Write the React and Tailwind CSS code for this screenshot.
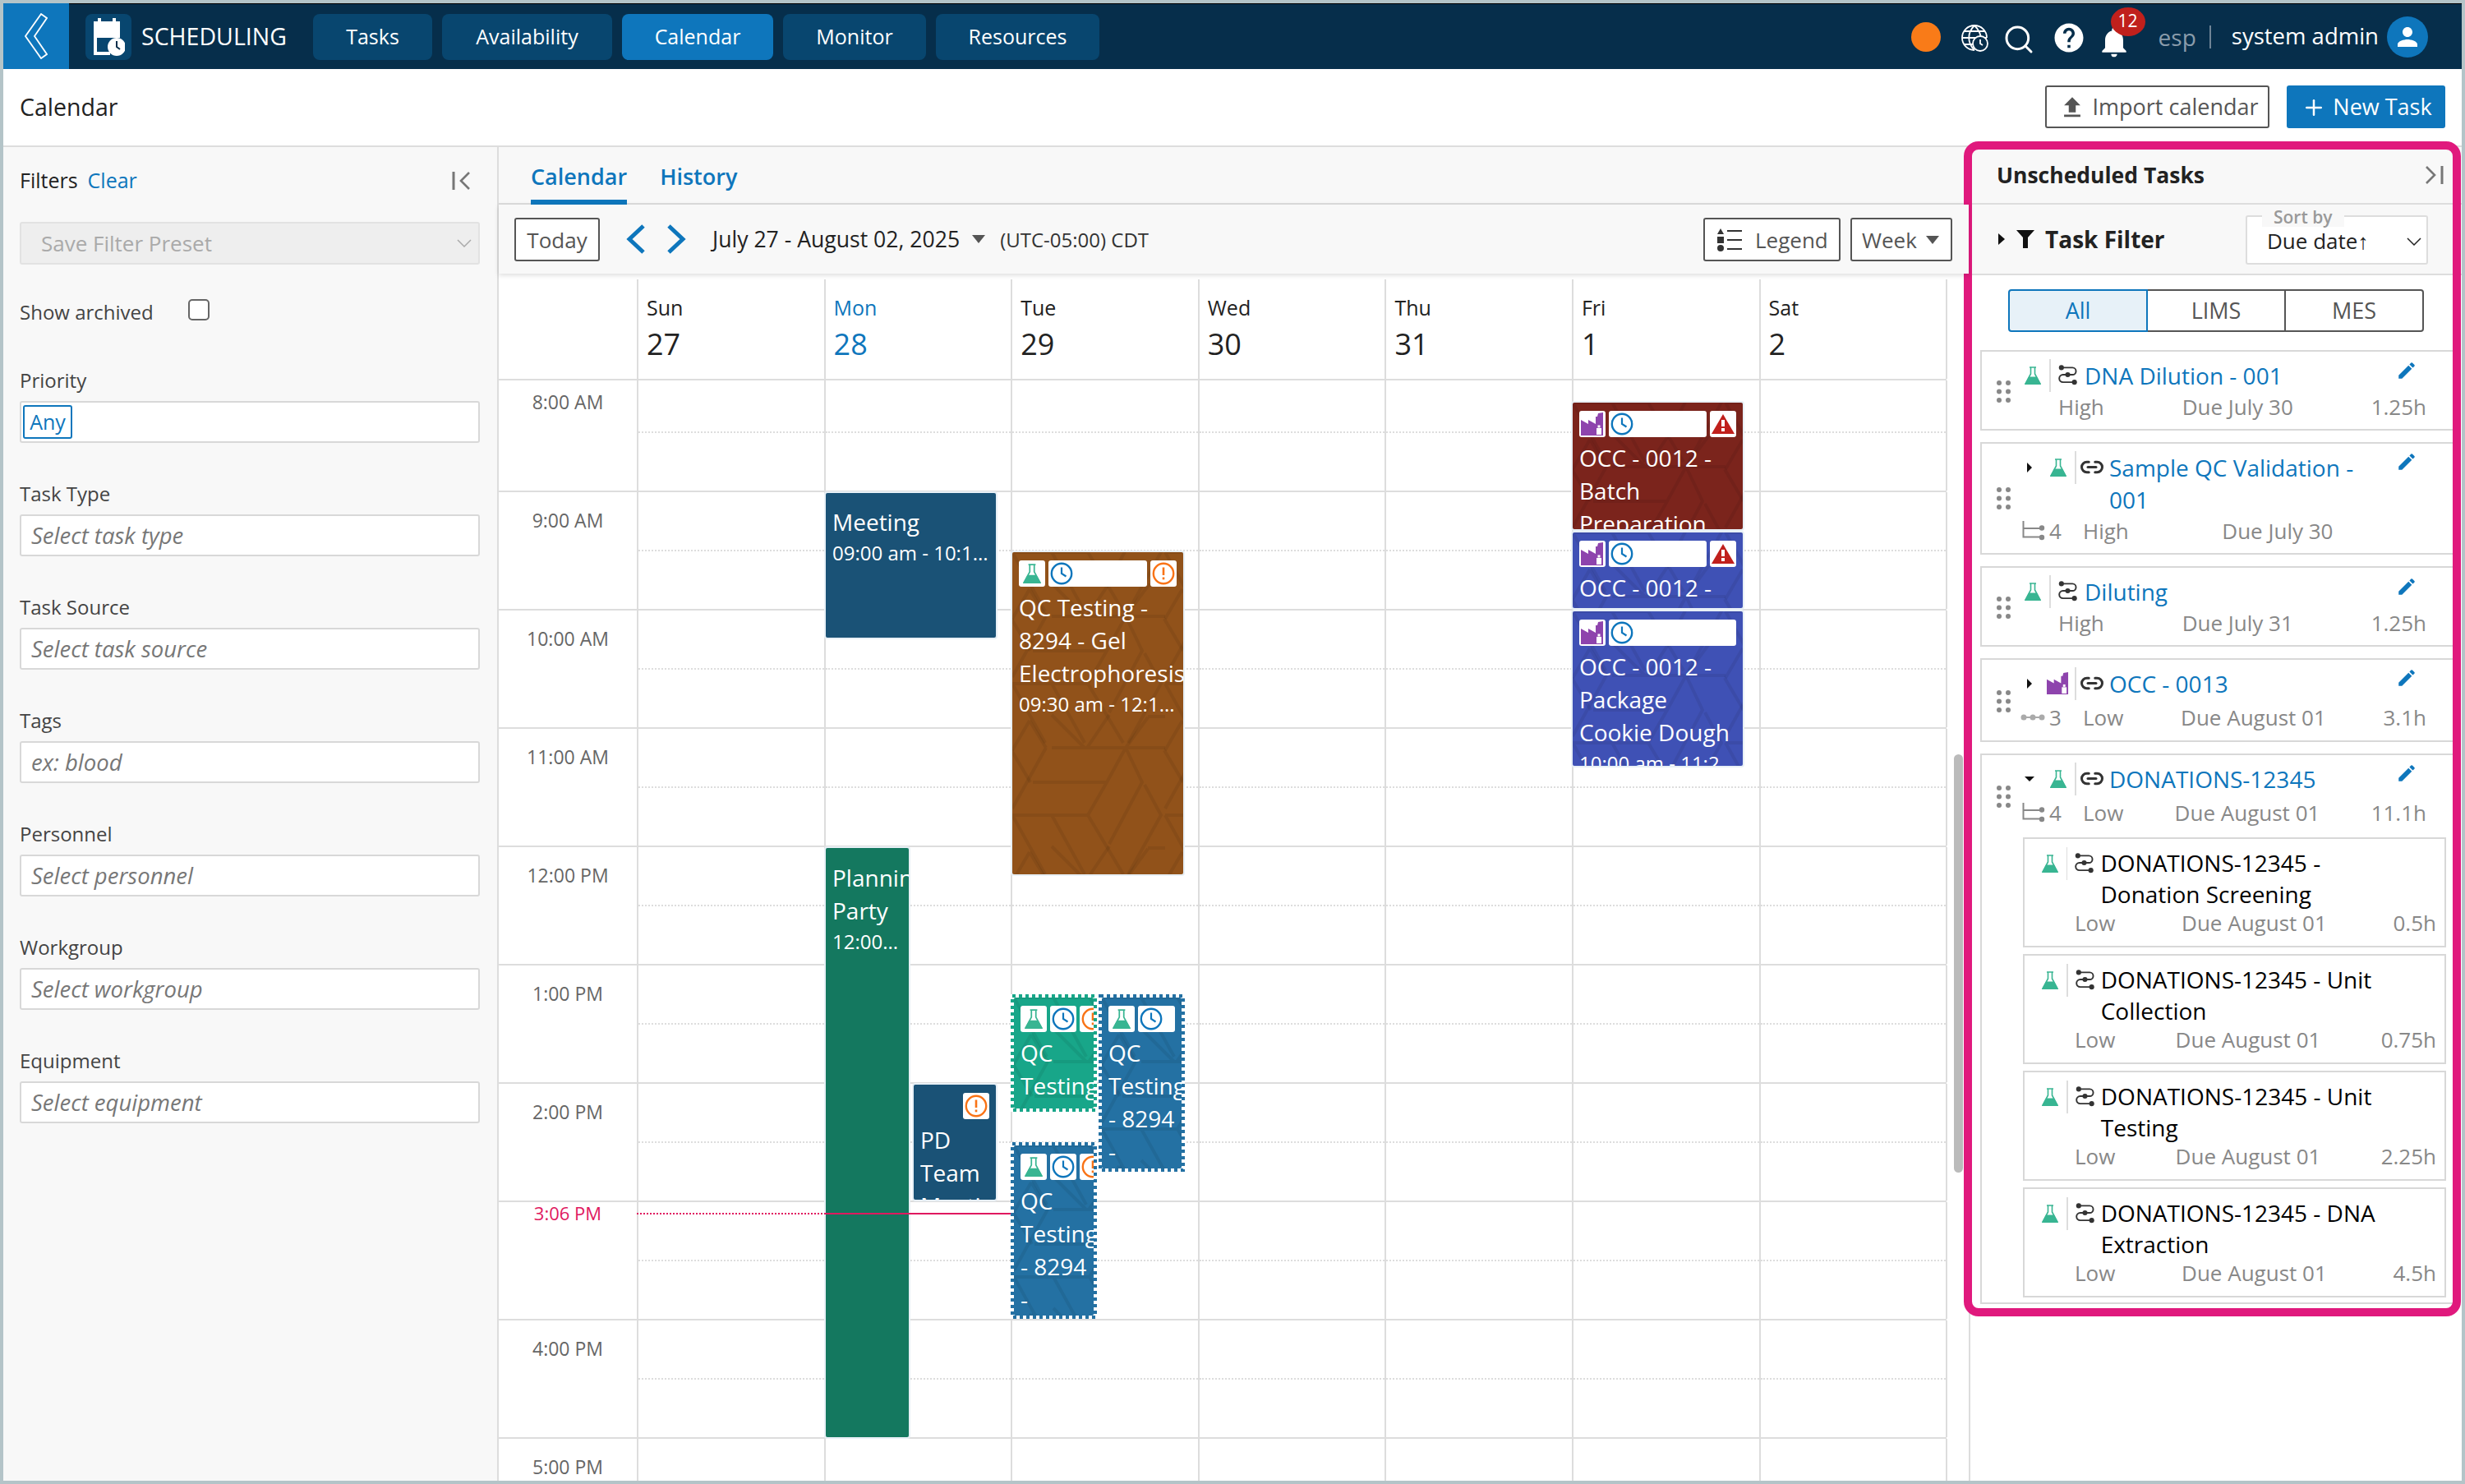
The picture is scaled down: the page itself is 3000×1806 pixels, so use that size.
import React from "react";
import { Search, Plus, Link2 } from "lucide-react";
import { MdHelp, MdNotifications, MdPerson, MdFileUpload, MdEdit } from "react-icons/md";

const hours = ["8:00 AM", "9:00 AM", "10:00 AM", "11:00 AM", "12:00 PM", "1:00 PM", "2:00 PM", "", "4:00 PM", "5:00 PM"];
const days = [
  ["Sun", "27"],
  ["Mon", "28"],
  ["Tue", "29"],
  ["Wed", "30"],
  ["Thu", "31"],
  ["Fri", "1"],
  ["Sat", "2"],
];
const filters = [
  ["Task Type", "Select task type"],
  ["Task Source", "Select task source"],
  ["Tags", "ex: blood"],
  ["Personnel", "Select personnel"],
  ["Workgroup", "Select workgroup"],
  ["Equipment", "Select equipment"],
];

// Small icons
const Flask = ({ className }) => (
  <svg viewBox="0 0 20 22" className={className}>
    <path d="M6 1h8M7.500 1v8L1 21h18L12.500 9V1" fill="none" stroke="#38b592" strokeWidth="1.600" />
    <path d="M5 12.500h10l5 9.500H0z" fill="#38b592" />
  </svg>
);

const Clock = ({ className }) => (
  <svg viewBox="0 0 28 28" className={className}>
    <circle cx="14" cy="14" r="12.200" fill="none" stroke="#0e76bc" strokeWidth="2.400" />
    <path d="M14 6.500V14l5.500 3.500" fill="none" stroke="#0e76bc" strokeWidth="2.200" />
  </svg>
);

const Warn = ({ className }) => (
  <svg viewBox="0 0 28 26" className={className}>
    <path d="M14 1L28 25H0z" fill="#c0201c" />
    <rect x="12" y="8" width="4" height="8" fill="#fff" />
    <rect x="12" y="18" width="4" height="4" fill="#fff" />
  </svg>
);

const Alert = ({ className }) => (
  <svg viewBox="0 0 28 28" className={className}>
    <circle cx="14" cy="14" r="12.200" fill="none" stroke="#f97316" strokeWidth="2.400" />
    <rect x="12.700" y="6.500" width="2.600" height="9.500" fill="#f97316" />
    <rect x="12.700" y="18.500" width="2.600" height="2.800" fill="#f97316" />
  </svg>
);

const Factory = ({ className }) => (
  <svg viewBox="0 0 28 28" className={className}>
    <path d="M0 28V9l9 5V9l9 5V5l2 0 1-4 6-1v28z" fill="#8e44ad" />
    <rect x="19" y="19" width="6" height="8" fill="#fff" />
    <rect x="20.500" y="15.500" width="3" height="3" fill="#fff" />
  </svg>
);

const Process = ({ className }) => (
  <svg viewBox="0 0 24 26" className={className} fill="none" stroke="#333" strokeWidth="2">
    <path d="M4 3.500H18a4.500 4.500 0 0 1 0 9H6a4.500 4.500 0 0 0 0 9.500H20" />
    <circle cx="4" cy="3.500" r="3.200" fill="#333" stroke="none" />
    <circle cx="12" cy="12.500" r="3.200" fill="#333" stroke="none" />
    <circle cx="20.500" cy="22" r="3.200" fill="#333" stroke="none" />
  </svg>
);

const Tree = () => (
  <svg viewBox="0 0 28 24" className="w-[28px] h-[24px] shrink-0 ml-[2px]" fill="none" stroke="#888" strokeWidth="2">
    <path d="M1.500 0V19.500H22M1.500 9H22" />
    <circle cx="24" cy="8.500" r="3.200" fill="#888" stroke="none" />
    <circle cx="24" cy="20" r="3.200" fill="#888" stroke="none" />
  </svg>
);

const Chain = () => (
  <svg viewBox="0 0 30 10" className="w-[30px] h-[10px] shrink-0 self-center" stroke="#aaa" strokeWidth="2">
    <path d="M2 5H28" />
    <circle cx="4" cy="5" r="3.500" fill="#aaa" stroke="none" />
    <circle cx="15" cy="5" r="3.500" fill="#aaa" stroke="none" />
    <circle cx="26" cy="5" r="3.500" fill="#aaa" stroke="none" />
  </svg>
);

const Dots = () => (
  <svg viewBox="0 0 17 27" className="w-[17px] h-[27px] shrink-0" fill="#888">
    <circle cx="3" cy="3" r="3" />
    <circle cx="14" cy="3" r="3" />
    <circle cx="3" cy="13.500" r="3" />
    <circle cx="14" cy="13.500" r="3" />
    <circle cx="3" cy="24" r="3" />
    <circle cx="14" cy="24" r="3" />
  </svg>
);

const Caret = ({ open }) => (
  <svg viewBox="0 0 12 12" className="w-[12px] h-[12px]">
    {open ? <path d="M0 3h12L6 9z" fill="#111" /> : <path d="M3 0v12l6-6z" fill="#111" />}
  </svg>
);

const Collapse = ({ flip }) => (
  <svg viewBox="0 0 24 24" className={flip ? "w-[24px] h-[24px] scale-x-[-1]" : "w-[24px] h-[24px]"} fill="none" stroke="#777" strokeWidth="2.600">
    <path d="M2 1V23" strokeWidth="3" />
    <path d="M21 2L11 12l10 10" />
  </svg>
);

// Cube lines of the task block background, one 186x160 tile
const cube =
  "M48 40H186M25 82H115M0 122H92M41 40L0 114M138 40L115 82L92 122L135 194M138 40L158 82L118 157M161 85L181 122L141 194M0 122L40 194M48 122L88 194M21 7L41 40M0 43L21 7M48 0L88 40M91 40L118 0M165 3L138 40M165 2H186M185 43L208 82";

const Pattern = ({ id }) => (
  <svg className="absolute inset-0 w-full h-full pointer-events-none">
    <defs>
      <pattern id={id} width="186" height="160" patternUnits="userSpaceOnUse" patternTransform="translate(0 38)">
        {[-186, 0, 186].map((dx) =>
          [-160, 0, 160].map((dy) => (
            <path key={`${dx}${dy}`} d={cube} transform={`translate(${dx} ${dy})`} fill="none" stroke="#000" strokeOpacity="0.07" strokeWidth="4" />
          ))
        )}
      </pattern>
    </defs>
    <rect width="100%" height="100%" fill={`url(#${id})`} />
  </svg>
);

const IconBox = ({ className, children }) => (
  <div className={`h-[32px] bg-white rounded-[3px] flex items-center shrink-0 ${className}`}>{children}</div>
);

const events = [
  {
    id: "meeting",
    pos: "left-[398px] top-[137px] w-[207px] h-[176px]",
    bg: "bg-[#1a5276]",
    plain: true,
    top: "pt-[15px]",
    title: ["Meeting"],
    time: "09:00 am - 10:1...",
  },
  {
    id: "gel",
    pos: "left-[625px] top-[209px] w-[208px] h-[392px]",
    bg: "bg-[#91521a]",
    flask: true,
    alert: "alert",
    clockW: "w-[120px]",
    title: ["QC Testing -", "8294 - Gel", "Electrophoresis"],
    time: "09:30 am - 12:1...",
  },
  {
    id: "planning",
    pos: "left-[398px] top-[569px] w-[101px] h-[717px]",
    bg: "bg-[#14785f]",
    plain: true,
    top: "pt-[16px]",
    title: ["Planning", "Party"],
    time: "12:00...",
  },
  {
    id: "pd",
    pos: "left-[505px] top-[857px] w-[100px] h-[140px]",
    bg: "bg-[#1a5276]",
    onlyAlert: true,
    noPattern: true,
    title: ["PD", "Team", "Meeting"],
  },
  {
    id: "red",
    pos: "left-[1307px] top-[27px] w-[207px] h-[154px]",
    bg: "bg-[#7b241c]",
    factory: true,
    alert: "warn",
    clockW: "w-[119px]",
    title: ["OCC - 0012 -", "Batch", "Preparation"],
  },
  {
    id: "occ1",
    pos: "left-[1307px] top-[185px] w-[207px] h-[92px]",
    bg: "bg-[#3f51b5]",
    factory: true,
    alert: "warn",
    clockW: "w-[119px]",
    title: ["OCC - 0012 -"],
  },
  {
    id: "occ2",
    pos: "left-[1307px] top-[281px] w-[207px] h-[188px]",
    bg: "bg-[#3f51b5]",
    factory: true,
    clockW: "w-[155px]",
    title: ["OCC - 0012 -", "Package", "Cookie Dough"],
    time: "10:00 am - 11:2",
  },
];

const dashed = [
  { id: "qc1", pos: "left-[623px] top-[747px] w-[105px] h-[143px]", w: 105, h: 143, color: "#18a689", bg: "bg-[#18a689]", alert: true, title: ["QC", "Testing"] },
  { id: "qc2", pos: "left-[623px] top-[927px] w-[105px] h-[215px]", w: 105, h: 215, color: "#2471a3", bg: "bg-[#2471a3]", alert: true, title: ["QC", "Testing", "- 8294", "-"] },
  { id: "qc3", pos: "left-[730px] top-[747px] w-[105px] h-[216px]", w: 105, h: 216, color: "#2471a3", bg: "bg-[#2471a3]", title: ["QC", "Testing", "- 8294", "-"] },
];

const EventBlock = ({ ev }) => (
  <div className={`absolute ${ev.pos} ${ev.bg} rounded-[2px] ring-2 ring-[#e8f0f6] overflow-hidden text-white`}>
    {!ev.plain && !ev.noPattern && <Pattern id={`p-${ev.id}`} />}
    <div className={`relative px-[8px] ${ev.top || "pt-[10px]"}`}>
      {!ev.plain && !ev.onlyAlert && (
        <div className="flex gap-[4px] mb-[5px]">
          <IconBox className="w-[32px] justify-center">
            {ev.flask ? <Flask className="w-[22px] h-[24px]" /> : <Factory className="w-[28px] h-[28px]" />}
          </IconBox>
          <IconBox className={`${ev.clockW} pl-[2px]`}>
            <Clock className="w-[28px] h-[28px]" />
          </IconBox>
          {ev.alert === "warn" && (
            <IconBox className="w-[32px] justify-center">
              <Warn className="w-[28px] h-[26px]" />
            </IconBox>
          )}
          {ev.alert === "alert" && (
            <IconBox className="w-[32px] justify-center">
              <Alert className="w-[28px] h-[28px]" />
            </IconBox>
          )}
        </div>
      )}
      {ev.onlyAlert && (
        <div className="flex justify-end mb-[5px]">
          <IconBox className="w-[32px] justify-center">
            <Alert className="w-[28px] h-[28px]" />
          </IconBox>
        </div>
      )}
      {ev.title.map((line) => (
        <div key={line} className="text-[28px] leading-[40px] font-medium whitespace-nowrap">
          {line}
        </div>
      ))}
      {ev.time && <div className="text-[24px] leading-[36px] whitespace-nowrap">{ev.time}</div>}
    </div>
  </div>
);

const DashedBlock = ({ ev }) => (
  <div className={`absolute ${ev.pos} bg-white overflow-hidden text-white`}>
    <svg className="absolute inset-0 w-full h-full" width={ev.w} height={ev.h}>
      <rect x="2" y="2" width={ev.w - 4} height={ev.h - 4} fill="none" stroke={ev.color} strokeWidth="4" strokeDasharray="4 4" />
    </svg>
    <div className={`absolute inset-[4px] ${ev.bg} rounded-[2px] overflow-hidden`}>
      <Pattern id={`p-${ev.id}`} />
      <div className="relative pl-[8px] pt-[10px]">
        <div className="flex gap-[4px] mb-[5px]">
          <IconBox className="w-[32px] justify-center">
            <Flask className="w-[22px] h-[24px]" />
          </IconBox>
          <IconBox className={ev.alert ? "w-[32px] justify-center" : "w-[45px] pl-[2px]"}>
            <Clock className="w-[28px] h-[28px]" />
          </IconBox>
          {ev.alert && (
            <IconBox className="w-[32px] pl-[2px]">
              <Alert className="w-[28px] h-[28px] shrink-0" />
            </IconBox>
          )}
        </div>
        {ev.title.map((line, i) => (
          <div key={i} className="text-[28px] leading-[40px] font-medium whitespace-nowrap">
            {line}
          </div>
        ))}
      </div>
    </div>
  </div>
);

const Meta = ({ left, due, est, className }) => (
  <div className={`flex justify-between text-[26px] text-[#888] ${className}`}>
    <span>{left}</span>
    <span>{due}</span>
    <span>{est}</span>
  </div>
);

// Card with no children: flask, separator, process icon
const SimpleTask = ({ title, pri, due, est }) => (
  <div className="flex items-center h-[98px] border-2 border-[#d8d8d8] pt-[9px] pb-[6px] pr-[33px] shrink-0">
    <div className="pl-[18px] pr-[12px] flex items-center">
      <Dots />
    </div>
    <div className="flex-1 min-w-0 self-start">
      <div className="flex items-center h-[39px]">
        <Flask className="w-[20px] h-[22px] ml-[5px]" />
        <div className="w-[2px] h-[40px] bg-[#ddd] ml-[10px]" />
        <Process className="w-[23px] h-[25px] ml-[9px]" />
        <span className="ml-[9px] pt-[2px] text-[28px] leading-[39px] text-[#0e76bc]">{title}</span>
        <MdEdit className="ml-auto mr-[11px] -mt-[12px] text-[#0e76bc] w-[26px] h-[26px]" />
      </div>
      <Meta left={pri} due={due} est={est} className="ml-[46px] leading-[38px]" />
    </div>
  </div>
);

const ParentHead = ({ icon, title, sub, count, pri, due, est, metaClass }) => (
  <div className="flex items-center pr-[33px]">
    <div className="pl-[18px] pr-[12px] flex items-center">
      <Dots />
    </div>
    <div className="flex-1 min-w-0">
      <div className="flex items-start">
        <div className="w-[36px] h-[39px] flex items-center pl-[5px]">
          <Caret open={sub === "open"} />
        </div>
        <div className="w-[28px] h-[39px] flex items-center">{icon}</div>
        <div className="w-[2px] h-[40px] bg-[#ddd] ml-[2px]" />
        <Link2 className="w-[30px] h-[39px] ml-[4px] shrink-0 text-[#333]" strokeWidth={2.4} />
        <span className="ml-[6px] pt-[1px] text-[28px] leading-[39px] text-[#0e76bc] flex-1 pr-[40px]">{title}</span>
        <MdEdit className="mr-[11px] text-[#0e76bc] w-[26px] h-[26px] shrink-0" />
      </div>
      <div className={`flex items-center ${metaClass}`}>
        <div className="w-[35px] flex">{count === "3" ? <Chain /> : <Tree />}</div>
        <span className="text-[26px] text-[#888] w-[41px]">{count}</span>
        <Meta left={pri} due={due} est={est} className="flex-1" />
      </div>
    </div>
  </div>
);

const SubTask = ({ title, due, est }) => (
  <div className="border-2 border-[#d8d8d8] h-[134px] pt-[10px] pr-[10px] pl-[21px] shrink-0">
    <div className="flex items-start">
      <div className="h-[39px] flex items-center">
        <Flask className="w-[20px] h-[22px]" />
      </div>
      <div className="w-[2px] h-[40px] bg-[#ddd] ml-[10px]" />
      <div className="h-[39px] flex items-center ml-[9px]">
        <Process className="w-[23px] h-[25px]" />
      </div>
      <span className="ml-[8px] pr-[20px] text-[28px] leading-[38px] text-black">{title}</span>
    </div>
    <Meta left="Low" due={due} est={est} className="ml-[40px] leading-[33px]" />
  </div>
);

const Field = ({ label, text }) => (
  <div className="mt-[45px]">
    <div className="text-[24px] leading-[34px] text-[#444]">{label}</div>
    <div className="mt-[8px] h-[51px] bg-white border-2 border-[#d8d8d8] rounded-[3px] flex items-center px-[12px] text-[27.500px] italic text-[#777]">{text}</div>
  </div>
);

export default function App() {
  return (
    <div className="w-[3000px] h-[1806px] p-[4px] bg-[#b4c4c8] overflow-hidden relative flex flex-col font-['Open_Sans',sans-serif] text-[#222]">
      {/* Top navigation */}
      <div className="h-[80px] shrink-0 bg-[#062e4b] border-t border-black flex items-center text-white">
        <div className="w-[80px] h-[80px] bg-[#0e76bc] flex items-center justify-center -mt-px">
          <svg viewBox="0 0 28 56" className="w-[28px] h-[56px]" fill="none" stroke="#fff" strokeWidth="1.800">
            <path d="M20 1L1 28L20 55L27 50L12 28L27 6z" />
          </svg>
        </div>
        <div className="ml-[20px] w-[56px] h-[56px] bg-[#08466f] rounded-[8px] flex items-center justify-center">
          <svg viewBox="0 0 40 50" className="w-[40px] h-[50px]">
            <path d="M2 6h5V2h4v4h14V2h4v4h5v20H2z" fill="#fff" />
            <path d="M2 26h4v17h16v4H2z" fill="#fff" />
            <circle cx="30" cy="37" r="11" fill="#fff" />
            <path d="M30 30v7l4 3" fill="none" stroke="#062e4b" strokeWidth="2" />
          </svg>
        </div>
        <div className="ml-[12px] w-[209px] text-[28.500px] font-medium">SCHEDULING</div>
        <div className="flex gap-[12px] text-[25px] font-medium">
          <div className="w-[145px] h-[56px] rounded-[8px] bg-[#08466f] flex items-center justify-center">Tasks</div>
          <div className="w-[207px] h-[56px] rounded-[8px] bg-[#08466f] flex items-center justify-center">Availability</div>
          <div className="w-[184px] h-[56px] rounded-[8px] bg-[#0e76bc] flex items-center justify-center">Calendar</div>
          <div className="w-[174px] h-[56px] rounded-[8px] bg-[#08466f] flex items-center justify-center">Monitor</div>
          <div className="w-[199px] h-[56px] rounded-[8px] bg-[#08466f] flex items-center justify-center">Resources</div>
        </div>
        <div className="ml-auto flex items-center pr-[41px]">
          <div className="w-[36px] h-[36px] rounded-full bg-[#f97b18]" />
          <svg viewBox="0 0 34 34" className="w-[34px] h-[34px] ml-[24px] mt-[3px]" fill="none" stroke="#fff" strokeWidth="1.800">
            <path d="M17 32a15 15 0 1 1 15-15M2 17h30M4 9h26M4 25h11M17 2c-9 9-9 21 0 30M17 2c6 6 8 12 8 17" />
            <circle cx="24" cy="24" r="9" fill="#062e4b" />
            <path d="M24 19v5l3 2" />
          </svg>
          <Search className="w-[40px] h-[40px] ml-[17px] mt-[6px]" strokeWidth={1.800} />
          <MdHelp className="w-[42px] h-[42px] ml-[20px] mt-[2px]" />
          <div className="relative w-[34px] h-[40px] ml-[19px] mt-[8px]">
            <MdNotifications className="w-[44px] h-[44px] -ml-[7px] max-w-none" />
            <div className="absolute left-[11px] -top-[20px] w-[42px] h-[35px] rounded-[50%] bg-[#c0201c] flex items-center justify-center text-[21px]">12</div>
          </div>
          <span className="ml-[35px] text-[28px] text-[#8a9cab]">esp</span>
          <div className="ml-[16px] w-[2px] h-[28px] bg-[#6f8496]" />
          <span className="ml-[25px] -mt-[2px] text-[27.500px]">system admin</span>
          <div className="ml-[10px] w-[50px] h-[50px] rounded-full bg-[#0e76bc] flex items-center justify-center">
            <MdPerson className="w-[36px] h-[36px]" />
          </div>
        </div>
      </div>

      {/* Page title bar */}
      <div className="h-[95px] shrink-0 bg-white border-b-2 border-[#ddd] flex items-center justify-between pl-[20px] pr-[20px]">
        <div className="text-[28.500px] font-medium">Calendar</div>
        <div className="flex gap-[21px] -mt-[2px]">
          <button className="w-[273px] h-[52px] border-2 border-[#555] rounded-[3px] flex items-center justify-center gap-[8px] pl-[2px] pt-[2px] text-[27px] text-[#555] font-medium">
            <MdFileUpload className="w-[34px] h-[34px]" />
            Import calendar
          </button>
          <button className="w-[193px] h-[52px] bg-[#0e76bc] rounded-[3px] flex items-center justify-center gap-[8px] pl-[2px] pt-[2px] text-[27px] text-white font-medium">
            <Plus className="w-[30px] h-[30px]" strokeWidth={2} />
            New Task
          </button>
        </div>
      </div>

      <div className="flex-1 min-h-0 flex">
        {/* Filters */}
        <div className="w-[603px] shrink-0 bg-[#f8f8f8] border-r-2 border-[#ddd] pl-[20px] pt-[24px]">
          <div className="w-[560px]">
            <div className="flex items-center h-[34px] text-[25px]">
              <span className="font-medium">Filters</span>
              <span className="ml-[12px] font-medium text-[#0e76bc]">Clear</span>
              <div className="ml-auto mr-[10px] flex">
                <Collapse />
              </div>
            </div>
            <div className="mt-[33px] h-[52px] bg-[#eee] border-2 border-[#e2e2e2] rounded-[3px] flex items-center justify-between pl-[24px] pr-[8px] text-[26px] text-[#aaa]">
              Save Filter Preset
              <svg viewBox="0 0 18 10" className="w-[18px] h-[10px]" fill="none" stroke="#aaa" strokeWidth="1.500">
                <path d="M1 1l8 8 8-8" />
              </svg>
            </div>
            <div className="mt-[41px] h-[34px] flex items-center text-[24px] text-[#444]">
              <span>Show archived</span>
              <div className="ml-[42px] -mt-[6px] w-[26px] h-[26px] border-2 border-[#666] rounded-[5px] bg-white" />
            </div>
            <div className="mt-[49px] text-[24px] leading-[34px] text-[#444]">Priority</div>
            <div className="mt-[8px] h-[51px] bg-white border-2 border-[#d8d8d8] rounded-[3px] flex items-center pl-[2px]">
              <div className="h-[41px] w-[60px] border-2 border-[#0e76bc] rounded-[3px] flex items-center justify-center text-[25px] text-[#0e76bc] font-medium">Any</div>
            </div>
            {filters.map(([label, text]) => (
              <Field key={label} label={label} text={text} />
            ))}
          </div>
        </div>

        {/* Calendar */}
        <div className="w-[1789px] shrink-0 flex flex-col bg-white">
          <div className="h-[70px] shrink-0 bg-[#f8f8f8] border-b-2 border-[#ddd] flex pl-[39px] gap-[40px] text-[27px] font-semibold text-[#0e76bc]">
            <div className="h-[70px] pt-[16px] border-b-[6px] border-[#0e76bc]">Calendar</div>
            <div className="h-[70px] pt-[16px]">History</div>
          </div>
          <div className="h-[84px] shrink-0 bg-[#f8f8f8] relative z-10 shadow-[0_2px_6px_rgba(0,0,0,0.14)] flex items-center pl-[19px] pr-[20px]">
            <button className="w-[104px] h-[53px] border-2 border-[#555] rounded-[3px] bg-white pt-[2px] text-[26px] text-[#555]">Today</button>
            <svg viewBox="0 0 24 36" className="w-[24px] h-[36px] ml-[32px]" fill="none" stroke="#0e76bc" strokeWidth="5">
              <path d="M21 2L4 18l17 16" />
            </svg>
            <svg viewBox="0 0 24 36" className="w-[24px] h-[36px] ml-[25px]" fill="none" stroke="#0e76bc" strokeWidth="5">
              <path d="M3 2l17 16L3 34" />
            </svg>
            <span className="ml-[32px] pt-[2px] text-[26.600px] font-medium">July 27 - August 02, 2025</span>
            <svg viewBox="0 0 16 12" className="w-[16px] h-[12px] ml-[15px]">
              <path d="M0 1h16L8 11z" fill="#555" />
            </svg>
            <span className="ml-[18px] pt-[2px] text-[24px] text-[#333]">(UTC-05:00) CDT</span>
            <button className="ml-auto w-[167px] h-[53px] border-2 border-[#555] rounded-[3px] bg-white flex items-center pl-[15px] pt-[2px] text-[26px] text-[#555] gap-[16px]">
              <svg viewBox="0 0 30 28" className="w-[30px] h-[28px]" fill="#333">
                <path d="M4 0l4 7H0z" />
                <rect x="0" y="10" width="8" height="8" />
                <circle cx="4" cy="24" r="4" />
                <rect x="12" y="2" width="18" height="2" />
                <rect x="12" y="13" width="18" height="2" />
                <rect x="12" y="24" width="18" height="2" />
              </svg>
              Legend
            </button>
            <button className="ml-[12px] w-[124px] h-[53px] border-2 border-[#555] rounded-[3px] bg-white flex items-center pl-[12px] pt-[2px] text-[26px] text-[#555] gap-[11px]">
              Week
              <svg viewBox="0 0 16 10" className="w-[16px] h-[10px]">
                <path d="M0 0h16L8 10z" fill="#555" />
              </svg>
            </button>
          </div>

          {/* Day header */}
          <div className="mt-[7px] w-[1762px] h-[123px] shrink-0 flex border-b-2 border-[#ddd]">
            <div className="w-[168px] shrink-0" />
            {days.map(([name, num]) => (
              <div key={name} className={`w-[227.6px] shrink-0 border-l-2 border-[#ddd] pl-[10px] pt-[17px] ${name === "Mon" ? "text-[#0e76bc]" : "text-[#222]"}`}>
                <div className="text-[25px] leading-[34px]">{name}</div>
                <div className="text-[36px] leading-[50px] mt-[3px]">{num}</div>
              </div>
            ))}
            <div className="border-l-2 border-[#ddd]" />
          </div>

          {/* Time grid */}
          <div className="flex-1 min-h-0 relative overflow-hidden">
            {hours.map((h, i) => (
              <div key={i} className={`flex w-[1762px] shrink-0 border-b-2 border-[#ddd] ${i === 0 ? "h-[136px]" : "h-[144px]"}`}>
                <div className={`w-[168px] shrink-0 text-center text-[23px] leading-[32px] text-[#666] ${i === 0 ? "pt-[10px]" : "pt-[18px]"}`}>{h}</div>
                {days.map(([name]) => (
                  <div key={name} className="w-[227.6px] shrink-0 border-l-2 border-[#ddd]">
                    <div className={`border-b-2 border-dotted border-[#ddd] ${i === 0 ? "h-[64px]" : "h-[72px]"}`} />
                  </div>
                ))}
                <div className="border-l-2 border-[#ddd]" />
              </div>
            ))}

            {events.map((ev) => (
              <EventBlock key={ev.id} ev={ev} />
            ))}
            {dashed.map((ev) => (
              <DashedBlock key={ev.id} ev={ev} />
            ))}

            {/* Current time */}
            <div className="absolute left-0 top-[996px] w-[168px] text-center text-[22px] leading-[34px] text-[#e0195f]">3:06 PM</div>
            <div className="absolute left-[168px] top-[1013px] w-[230px] border-t-2 border-dotted border-[#e0195f]" />
            <div className="absolute left-[398px] top-[1013px] w-[225px] h-[2px] bg-[#e0195f]" />

            <div className="absolute left-[1771px] top-[455px] w-[11px] h-[509px] bg-[#bbb] rounded-[6px]" />
          </div>
        </div>

        {/* Unscheduled tasks */}
        <div className="w-[600px] shrink-0 bg-white border-l-2 border-[#ddd] flex flex-col">
          <div className="h-[70px] shrink-0 bg-[#f8f8f8] border-b-2 border-[#ddd] flex items-center justify-between pl-[32px] pr-[22px]">
            <span className="pt-[2px] text-[26.500px] font-bold">Unscheduled Tasks</span>
            <Collapse flip />
          </div>
          <div className="h-[86px] shrink-0 bg-[#f8f8f8] border-b-2 border-[#ddd] flex items-center pl-[34px] relative">
            <svg viewBox="0 0 8 14" className="w-[8px] h-[14px]">
              <path d="M0 0v14l8-7z" fill="#111" />
            </svg>
            <svg viewBox="0 0 22 22" className="w-[22px] h-[22px] ml-[14px]">
              <path d="M0 0h22l-8 9v13h-6V9z" fill="#111" />
            </svg>
            <span className="ml-[13px] text-[28px] font-bold">Task Filter</span>
            <div className="absolute left-[335px] top-[13px] w-[222px] h-[60px] border-2 border-[#ddd] rounded-[3px] bg-white flex items-center justify-between pl-[24px] pr-[6px] pt-[3px] text-[26px]">
              Due date↑
              <svg viewBox="0 0 18 10" className="w-[18px] h-[10px]" fill="none" stroke="#222" strokeWidth="1.500">
                <path d="M1 1l8 8 8-8" />
              </svg>
              <span className="absolute left-[18px] -top-[12px] px-[14px] bg-[#f8f8f8] text-[21px] leading-[24px] font-semibold text-[#999]">Sort by</span>
            </div>
          </div>
          <div className="pt-[17px] pl-[46px] flex shrink-0 text-[27px] font-medium text-[#555]">
            <div className="w-[170px] h-[52px] bg-[#e7f1f8] border-2 border-[#0e76bc] rounded-l-[4px] flex items-center justify-center text-[#0e76bc]">All</div>
            <div className="w-[168px] h-[52px] border-y-2 border-r-2 border-[#555] flex items-center justify-center">LIMS</div>
            <div className="w-[168px] h-[52px] border-y-2 border-r-2 border-[#555] rounded-r-[4px] flex items-center justify-center">MES</div>
          </div>
          <div className="mt-[22px] ml-[12px] mr-[8px] flex flex-col gap-[14px]">
            <SimpleTask title="DNA Dilution - 001" pri="High" due="Due July 30" est="1.25h" />
            <div className="h-[137px] border-2 border-[#d8d8d8] pt-[9px] shrink-0">
              <ParentHead
                icon={<Flask className="w-[20px] h-[22px]" />}
                title="Sample QC Validation - 001"
                count="4"
                pri="High"
                due="Due July 30"
                est=""
                metaClass="leading-[36px]"
              />
            </div>
            <SimpleTask title="Diluting" pri="High" due="Due July 31" est="1.25h" />
            <div className="h-[102px] border-2 border-[#d8d8d8] pt-[9px] shrink-0">
              <ParentHead
                icon={<Factory className="w-[27px] h-[27px] -ml-[4px]" />}
                title="OCC - 0013"
                count="3"
                pri="Low"
                due="Due August 01"
                est="3.1h"
                metaClass="leading-[42px]"
              />
            </div>
            <div className="h-[670px] border-2 border-[#d8d8d8] pt-[9px] shrink-0">
              <ParentHead
                icon={<Flask className="w-[20px] h-[22px]" />}
                title="DONATIONS-12345"
                sub="open"
                count="4"
                pri="Low"
                due="Due August 01"
                est="11.1h"
                metaClass="leading-[42px]"
              />
              <div className="mt-[9px] ml-[50px] mr-[9px] flex flex-col gap-[8px]">
                <SubTask title="DONATIONS-12345 - Donation Screening" due="Due August 01" est="0.5h" />
                <SubTask title="DONATIONS-12345 - Unit Collection" due="Due August 01" est="0.75h" />
                <SubTask title="DONATIONS-12345 - Unit Testing" due="Due August 01" est="2.25h" />
                <SubTask title="DONATIONS-12345 - DNA Extraction" due="Due August 01" est="4.5h" />
              </div>
            </div>
          </div>
        </div>
      </div>

      {/* Highlight around the unscheduled panel */}
      <div className="absolute left-[2390px] top-[172px] w-[605px] h-[1430px] border-[10px] border-[#e0197d] rounded-[18px] pointer-events-none" />
    </div>
  );
}
